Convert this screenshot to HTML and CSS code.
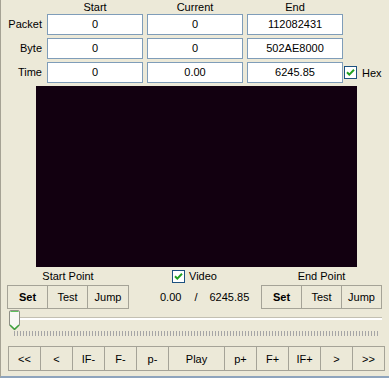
FILE: index.html
```html
<!DOCTYPE html>
<html lang="en">
<head>
    <meta charset="UTF-8">
    <title>Player</title>
    <link rel="stylesheet" href="styles.css">
</head>
<body>
    <div class="panel">
        <div class="fields">
            <span></span>
            <span class="head">Start</span>
            <span class="head">Current</span>
            <span class="head">End</span>
            <span></span>

            <span class="row-label">Packet</span>
            <div class="box">0</div>
            <div class="box">0</div>
            <div class="box">112082431</div>
            <span></span>

            <span class="row-label">Byte</span>
            <div class="box">0</div>
            <div class="box">0</div>
            <div class="box">502AE8000</div>
            <span></span>

            <span class="row-label">Time</span>
            <div class="box">0</div>
            <div class="box">0.00</div>
            <div class="box">6245.85</div>
            <label class="check hex">
                <svg class="tick" width="13" height="13" viewBox="0 0 13 13"><rect x="0.5" y="0.5" width="12" height="12" fill="#fff" stroke="#1c5180"/><path d="M3 6.2 L5.3 8.6 L10 3.8" fill="none" stroke="#21a121" stroke-width="2"/></svg>
                Hex
            </label>
        </div>

        <div class="video"></div>

        <div class="points">
            <div class="group left">
                <div class="group-label">Start Point</div>
                <div class="btns">
                    <button class="btn bold">Set</button>
                    <button class="btn">Test</button>
                    <button class="btn wide">Jump</button>
                </div>
            </div>
            <div class="middle">
                <label class="check video-check">
                    <svg class="tick" width="13" height="13" viewBox="0 0 13 13"><rect x="0.5" y="0.5" width="12" height="12" fill="#fff" stroke="#1c5180"/><path d="M3 6.2 L5.3 8.6 L10 3.8" fill="none" stroke="#21a121" stroke-width="2"/></svg>
                    Video
                </label>
                <div class="times">
                    <span>0.00</span>
                    <span class="slash">/</span>
                    <span>6245.85</span>
                </div>
            </div>
            <div class="group right">
                <div class="group-label">End Point</div>
                <div class="btns">
                    <button class="btn bold">Set</button>
                    <button class="btn">Test</button>
                    <button class="btn">Jump</button>
                </div>
            </div>
        </div>

        <div class="seek">
            <div class="track"></div>
            <div class="ticks"></div>
            <svg class="thumb" width="11" height="21" viewBox="0 0 11 21">
                <path d="M0.5 2 Q0.5 0.5 2 0.5 H9 Q10.5 0.5 10.5 2 V15 L5.5 20 L0.5 15 Z" fill="#f7f7f4" stroke="#8f8f86"/>
                <path d="M1.5 1.5 H9.5" stroke="#5cbf5c" stroke-width="1"/>
                <path d="M1 15 L5.5 19.3 L10 15" fill="none" stroke="#3aa33a" stroke-width="1.4"/>
            </svg>
        </div>

        <div class="transport">
            <button class="btn">&lt;&lt;</button>
            <button class="btn">&lt;</button>
            <button class="btn">IF-</button>
            <button class="btn">F-</button>
            <button class="btn">p-</button>
            <button class="btn play">Play</button>
            <button class="btn">p+</button>
            <button class="btn">F+</button>
            <button class="btn">IF+</button>
            <button class="btn">&gt;</button>
            <button class="btn">&gt;&gt;</button>
        </div>
    </div>
</body>
</html>
```

FILE: styles.css
```css
* {
    margin: 0;
    padding: 0;
    box-sizing: border-box;
}

body {
    font-family: 'Liberation Sans', Arial, sans-serif;
    font-size: 11px;
    background: #ece9d8;
    color: #000;
}

.panel {
    width: 389px;
    height: 378px;
    background: #ece9d8;
    border-left: 1px solid #a5a294;
    border-bottom: 2px solid #8ea4bd;
}

/* top text fields */
.fields {
    display: grid;
    grid-template-columns: 42px 96px 96px 96px auto;
    grid-template-rows: 11px 21px 21px 21px;
    column-gap: 4px;
    row-gap: 3px;
}

.head {
    text-align: center;
    line-height: 14px;
    height: 11px;
}

.row-label {
    text-align: right;
    line-height: 21px;
    padding-right: 1px;
}

.box {
    background: #fff;
    border: 1px solid #7f9db9;
    text-align: center;
    line-height: 19px;
}

.check {
    display: flex;
    align-items: center;
    gap: 5px;
}

.hex {
    margin-left: -3px;
}

.tick {
    display: block;
    flex-shrink: 0;
}

/* video area */
.video {
    margin: 3px 0 0 35px;
    width: 321px;
    height: 181px;
    background: #120010;
}

/* start / end point */
.points {
    display: flex;
    padding-left: 6px;
}

.group-label {
    height: 18px;
    line-height: 18px;
    text-align: center;
}

.btns {
    display: flex;
}

.btn {
    font-family: inherit;
    font-size: 11px;
    color: #000;
    background: #ece9d8;
    border: 1px solid #a5a397;
    width: 41px;
    height: 24px;
    text-align: center;
}

.btn + .btn {
    margin-left: -1px;
}

.btn.wide {
    width: 42px;
}

.bold {
    font-weight: bold;
}

.middle {
    width: 132px;
}

.video-check {
    height: 18px;
    padding-left: 43px;
    gap: 4px;
}

.times {
    height: 24px;
    display: flex;
    align-items: center;
    padding-left: 31px;
}

.slash {
    margin: 0 12px 0 13px;
}

/* seek bar */
.seek {
    position: relative;
    height: 37px;
}

.track {
    position: absolute;
    left: 9px;
    top: 8px;
    width: 372px;
    height: 3px;
    background: #fff;
    border-top: 1px solid #c3c0b2;
}

.ticks {
    position: absolute;
    left: 13px;
    top: 22px;
    width: 366px;
    height: 5px;
    background: repeating-linear-gradient(90deg, #a6a6a6 0, #a6a6a6 1px, transparent 1px, transparent 3px);
}

.thumb {
    position: absolute;
    left: 8px;
    top: 1px;
}

/* transport buttons */
.transport {
    display: flex;
    padding-left: 7px;
}

.transport .btn {
    width: 33px;
    height: 25px;
}

.transport .play {
    width: 57px;
}
```
